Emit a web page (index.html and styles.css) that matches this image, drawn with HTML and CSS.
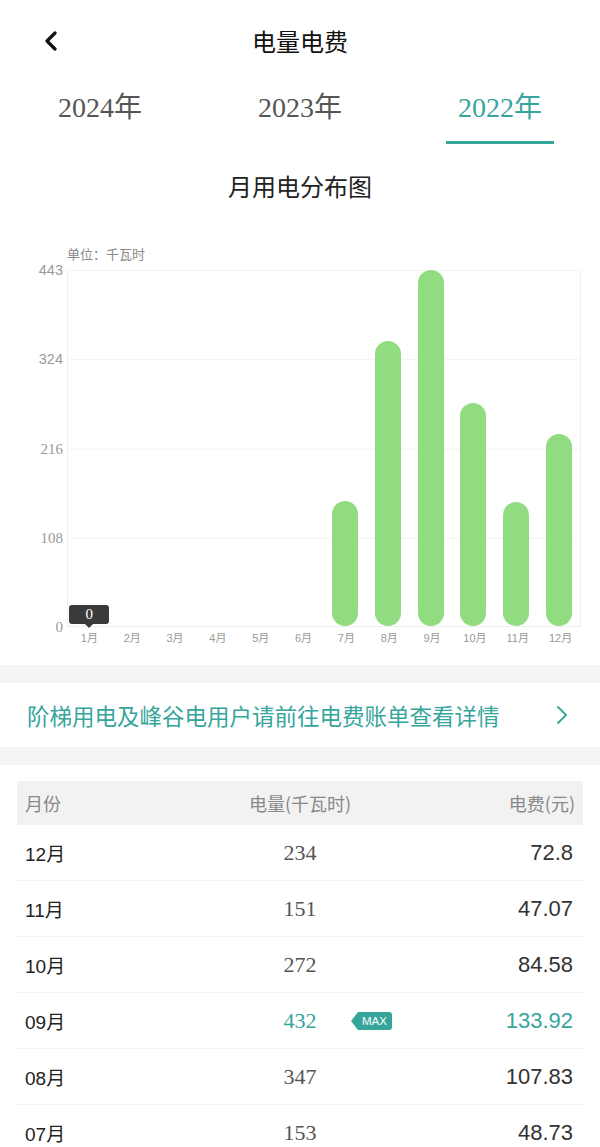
FILE: index.html
```html
<!DOCTYPE html>
<html lang="zh-CN">
<head>
<meta charset="utf-8">
<title>电量电费</title>
<link rel="stylesheet" href="styles.css">
</head>
<body>
<div class="page">
  <header class="topbar">
    <span class="back">
      <svg width="14" height="20" viewBox="0 0 14 20"><path d="M11 2 L3 10 L11 18" fill="none" stroke="#111" stroke-width="3.2" stroke-linecap="round" stroke-linejoin="round"/></svg>
    </span>
    <h1 class="title">电量电费</h1>
  </header>

  <nav class="tabs">
    <div class="tab">2024年</div>
    <div class="tab">2023年</div>
    <div class="tab active">2022年</div>
  </nav>

  <section class="chart">
    <h2 class="chart-title">月用电分布图</h2>
    <div class="unit">单位：千瓦时</div>
    <div class="plot-row">
      <div class="yaxis">
        <span class="ys">443</span>
        <span class="ys">324</span>
        <span class="yr">216</span>
        <span class="yr">108</span>
        <span class="yr">0</span>
      </div>
      <div class="plot">
        <div class="col"><div class="tip">0</div></div>
        <div class="col"></div>
        <div class="col"></div>
        <div class="col"></div>
        <div class="col"></div>
        <div class="col"></div>
        <div class="col"><div class="bar" style="height:125px"></div></div>
        <div class="col"><div class="bar" style="height:285px"></div></div>
        <div class="col"><div class="bar" style="height:356px"></div></div>
        <div class="col"><div class="bar" style="height:223px"></div></div>
        <div class="col"><div class="bar" style="height:124px"></div></div>
        <div class="col"><div class="bar" style="height:192px"></div></div>
      </div>
    </div>
    <div class="xaxis">
      <span>1月</span><span>2月</span><span>3月</span><span>4月</span><span>5月</span><span>6月</span>
      <span>7月</span><span>8月</span><span>9月</span><span>10月</span><span>11月</span><span>12月</span>
    </div>
  </section>

  <div class="gap"></div>

  <a class="link-row">
    <span class="link-text">阶梯用电及峰谷电用户请前往电费账单查看详情</span>
    <svg class="chev" width="12" height="20" viewBox="0 0 12 20"><path d="M2 2 L10 10 L2 18" fill="none" stroke="#36a59c" stroke-width="1.8" stroke-linecap="round" stroke-linejoin="round"/></svg>
  </a>

  <div class="gap"></div>

  <section class="table">
    <div class="thead">
      <span class="c1">月份</span>
      <span class="c2">电量(千瓦时)</span>
      <span class="c3">电费(元)</span>
    </div>
    <div class="row"><span class="c1">12月</span><span class="c2 num">234</span><span class="c3 fee">72.8</span></div>
    <div class="row"><span class="c1">11月</span><span class="c2 num">151</span><span class="c3 fee">47.07</span></div>
    <div class="row"><span class="c1">10月</span><span class="c2 num">272</span><span class="c3 fee">84.58</span></div>
    <div class="row max-row"><span class="c1">09月</span><span class="c2 num">432<span class="max">MAX</span></span><span class="c3 fee">133.92</span></div>
    <div class="row"><span class="c1">08月</span><span class="c2 num">347</span><span class="c3 fee">107.83</span></div>
    <div class="row"><span class="c1">07月</span><span class="c2 num">153</span><span class="c3 fee">48.73</span></div>
  </section>
</div>
</body>
</html>
```

FILE: styles.css
```css
html, body {
  margin: 0;
  padding: 0;
  overflow: hidden;
  background: #fff;
}
body {
  font-family: "Liberation Sans", "Noto Sans CJK SC", sans-serif;
  color: #222;
}
.page {
  width: 600px;
}

/* header */
.topbar {
  position: relative;
  height: 82px;
  display: flex;
  align-items: center;
  justify-content: center;
}
.back {
  position: absolute;
  left: 44px;
  top: 31px;
  display: flex;
}
.title {
  margin: 0;
  font-family: "Noto Sans CJK SC", sans-serif;
  font-size: 24px;
  font-weight: 400;
  color: #111;
  line-height: 34px;
}

/* tabs */
.tabs {
  display: grid;
  grid-template-columns: 1fr 1fr 1fr;
}
.tab {
  justify-self: center;
  padding-top: 8px;
  line-height: 36px;
  font-family: "Liberation Serif", "Noto Sans CJK SC", serif;
  font-size: 28px;
  color: #555;
  border-bottom: 3px solid transparent;
  padding-bottom: 15px;
}
.tab.active {
  color: #36a59c;
  border-bottom-color: #36a59c;
  width: 108px;
  text-align: center;
}

/* chart */
.chart {
  padding-bottom: 19px;
}
.chart-title {
  margin: 25px 0 0;
  text-align: center;
  font-family: "Noto Sans CJK SC", sans-serif;
  font-weight: 400;
  font-size: 24px;
  line-height: 34px;
  color: #222;
}
.unit {
  margin: 42px 0 0 67px;
  font-family: "Noto Sans CJK SC", sans-serif;
  font-size: 13px;
  line-height: 18px;
  color: #888;
}
.plot-row {
  display: flex;
  margin-top: 7px;
}
.yaxis {
  width: 63px;
  height: 373px;
  margin: -8px 0;
  display: flex;
  flex-direction: column;
  justify-content: space-between;
  align-items: flex-end;
  color: #999;
}
.yaxis span {
  height: 16px;
  line-height: 16px;
}
.ys {
  font-family: "Liberation Sans", sans-serif;
  font-size: 14.5px;
}
.yr {
  font-family: "Liberation Serif", serif;
  font-size: 15px;
}
.plot {
  margin-left: 4px;
  width: 514px;
  height: 357px;
  box-sizing: border-box;
  border-left: 1px solid #f1f1f1;
  border-right: 1px solid #f1f1f1;
  border-bottom: 1px solid #eeeeee;
  background-image: linear-gradient(#f1f1f1 1px, transparent 1px);
  background-size: 100% 89.25px;
  display: grid;
  grid-template-columns: repeat(12, 1fr);
}
.col {
  position: relative;
  display: flex;
  flex-direction: column;
  justify-content: flex-end;
  align-items: center;
}
.bar {
  width: 26px;
  border-radius: 13px;
  background: #91dc81;
}
.tip {
  position: absolute;
  bottom: 2px;
  left: 50%;
  transform: translateX(-50%);
  width: 40px;
  height: 19px;
  border-radius: 3px;
  background: #3a3a3a;
  color: #fff;
  font-family: "Liberation Serif", serif;
  font-size: 15px;
  line-height: 19px;
  text-align: center;
}
.tip::after {
  content: "";
  position: absolute;
  left: 50%;
  bottom: -4px;
  margin-left: -4px;
  border-left: 4px solid transparent;
  border-right: 4px solid transparent;
  border-top: 4px solid #3a3a3a;
}
.xaxis {
  margin: 3px 0 0 68px;
  width: 514px;
  display: grid;
  grid-template-columns: repeat(12, 1fr);
  justify-items: center;
  font-family: "Liberation Sans", "Noto Sans CJK SC", sans-serif;
  font-size: 11px;
  line-height: 16px;
  color: #999;
}

/* gaps and link */
.gap {
  height: 18px;
  background: #f4f5f7;
}
.link-row {
  height: 64px;
  display: flex;
  align-items: center;
  justify-content: space-between;
  padding: 0 32px 0 27px;
}
.link-text {
  font-family: "Noto Sans CJK SC", sans-serif;
  font-size: 22.5px;
  color: #36a59c;
}
.chev {
  display: block;
}

/* table */
.table {
  margin: 16px 17px 0;
}
.thead, .row {
  display: grid;
  grid-template-columns: 1fr 1fr 1fr;
  align-items: center;
  padding: 0 8px;
}
.thead {
  height: 44px;
  background: #f2f2f2;
  font-family: "Noto Sans CJK SC", sans-serif;
  font-size: 18px;
  color: #888;
}
.row {
  height: 55px;
  border-bottom: 1px solid #f2f2f2;
  margin: 0 -1px;
  padding: 0 9px 0 9px;
}
.c1 { text-align: left; }
.c2 { text-align: center; position: relative; }
.c3 { text-align: right; }
.row .c3 { padding-right: 2px; }
.row .c1 {
  font-family: "Liberation Sans", "Noto Sans CJK SC", sans-serif;
  font-size: 19px;
  color: #222;
}
.num {
  font-family: "Liberation Serif", serif;
  font-size: 22px;
  color: #555;
}
.fee {
  font-family: "Liberation Sans", sans-serif;
  font-size: 22px;
  color: #333;
}
.max-row .num, .max-row .fee {
  color: #36a59c;
}
.max {
  position: absolute;
  left: calc(50% + 58px);
  top: 50%;
  transform: translateY(-50%);
  height: 18px;
  padding: 0 5px 0 4px;
  background: #36a59c;
  border-radius: 0 3px 3px 0;
  color: #fff;
  font-family: "Liberation Sans", sans-serif;
  font-size: 11.5px;
  line-height: 18px;
}
.max::before {
  content: "";
  position: absolute;
  left: -7px;
  top: 0;
  border-right: 7px solid #36a59c;
  border-top: 9px solid transparent;
  border-bottom: 9px solid transparent;
}
```
